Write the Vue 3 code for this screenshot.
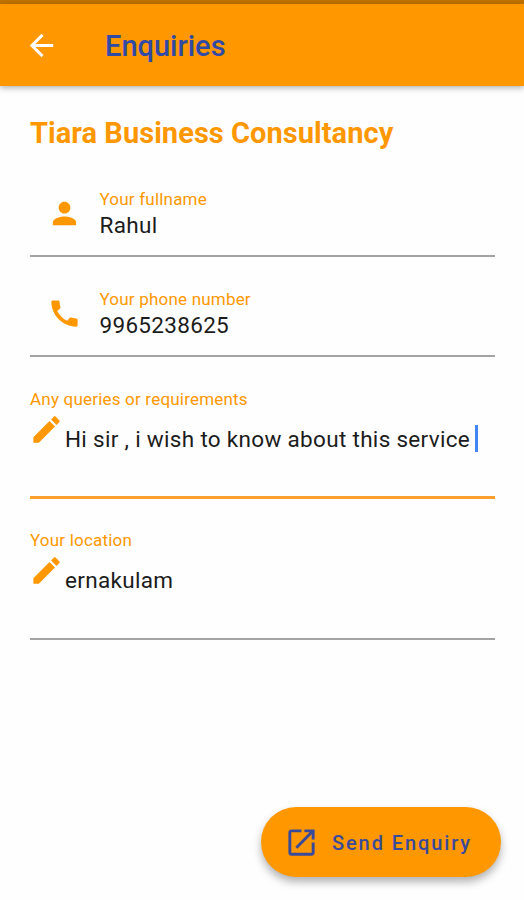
<template>
  <div class="screen">
    <div class="status-bar"></div>
    <header class="app-bar">
      <button class="back-btn" aria-label="Back">
        <svg class="icon" viewBox="0 0 24 24"><path :d="icons.back" /></svg>
      </button>
      <h1 class="app-title">Enquiries</h1>
    </header>

    <main class="content">
      <h2 class="company">Tiara Business Consultancy</h2>

      <div v-for="field in contactFields" :key="field.label" class="field">
        <svg class="icon" viewBox="0 0 24 24"><path :d="icons[field.icon]" /></svg>
        <div class="field-body">
          <span class="label">{{ field.label }}</span>
          <span class="value">{{ field.value }}</span>
        </div>
      </div>

      <div
          v-for="area in areas"
          :key="area.label"
          class="area"
          :class="{ focused: area.focused }"
      >
        <span class="label">{{ area.label }}</span>
        <div class="area-row">
          <svg class="icon" viewBox="0 0 24 24"><path :d="icons.edit" /></svg>
          <span class="value">{{ area.value }}</span>
          <span v-if="area.focused" class="caret"></span>
        </div>
      </div>
    </main>

    <footer class="actions">
      <button class="send-btn">
        <svg class="icon" viewBox="0 0 24 24"><path :d="icons.open" /></svg>
        <span class="send-text">Send Enquiry</span>
      </button>
    </footer>
  </div>
</template>

<script setup>
const icons = {
  back: 'M20 11H7.83l5.59-5.59L12 4l-8 8 8 8 1.41-1.41L7.83 13H20v-2z',
  person: 'M12 12c2.21 0 4-1.79 4-4s-1.79-4-4-4-4 1.79-4 4 1.79 4 4 4zm0 2c-2.67 0-8 1.34-8 4v2h16v-2c0-2.66-5.33-4-8-4z',
  phone: 'M20.01 15.38c-1.23 0-2.42-.2-3.53-.56-.35-.12-.74-.03-1.01.24l-1.57 1.97c-2.83-1.35-5.48-3.9-6.89-6.83l1.95-1.66c.27-.28.35-.67.24-1.02-.37-1.11-.56-2.3-.56-3.53 0-.54-.45-.99-.99-.99H4.19C3.65 3 3 3.24 3 3.99 3 13.28 10.73 21 20.01 21c.71 0 .99-.63.99-1.18v-3.45c0-.54-.45-.99-.99-.99z',
  edit: 'M3 17.25V21h3.75L17.81 9.94l-3.75-3.75L3 17.25zM20.71 7.04c.39-.39.39-1.02 0-1.41l-2.34-2.34c-.39-.39-1.02-.39-1.41 0l-1.83 1.83 3.75 3.75 1.83-1.83z',
  open: 'M19 19H5V5h7V3H5c-1.11 0-2 .9-2 2v14c0 1.1.89 2 2 2h14c1.1 0 2-.9 2-2v-7h-2v7zM14 3v2h3.59l-9.83 9.83 1.41 1.41L19 6.41V10h2V3h-7z',
};

const contactFields = [
  { icon: 'person', label: 'Your fullname', value: 'Rahul' },
  { icon: 'phone', label: 'Your phone number', value: '9965238625' },
];

const areas = [
  {
    label: 'Any queries or requirements',
    value: 'Hi sir , i wish to know about this service',
    focused: true,
  },
  { label: 'Your location', value: 'ernakulam', focused: false },
];
</script>

<style>
body {
  margin: 0;
  background: #fefefe;
}
</style>

<style scoped>
.screen {
  display: flex;
  flex-direction: column;
  height: 900px;
  overflow: hidden;
  background: #fefefe;
  font-family: Roboto, "Liberation Sans", sans-serif;
}

.icon {
  display: block;
  flex: none;
  width: 35px;
  height: 35px;
  fill: currentColor;
}

button {
  border: none;
  padding: 0;
  font-family: inherit;
  cursor: pointer;
}

.status-bar {
  flex: none;
  height: 4px;
  background: #bf7300;
}

.app-bar {
  display: flex;
  flex: none;
  align-items: center;
  box-sizing: border-box;
  height: 82px;
  padding: 1px 24px 0;
  background: #ff9800;
  box-shadow: 0 2px 6px rgba(0, 0, 0, 0.3);
}

.back-btn {
  background: none;
  color: #ffffff;
}

.app-title {
  margin: 0 0 0 46px;
  font-size: 29px;
  font-weight: 500;
  line-height: 34px;
  color: #304aa5;
}

.content {
  flex: 1;
  padding: 30px 29px 0 30px;
}

.company {
  margin: 0;
  font-size: 29px;
  font-weight: 700;
  line-height: 34px;
  letter-spacing: 0.05px;
  color: #ff9800;
}

.field {
  display: flex;
  box-sizing: border-box;
  height: 100px;
  padding: 39px 0 0 17px;
  border-bottom: 2px solid #a3a3a3;
  color: #ff9800;
}

.company + .field {
  height: 107px;
  padding-top: 46px;
}

.field-body {
  display: flex;
  flex-direction: column;
  margin: -8px 0 0 17.5px;
}

.label {
  display: block;
  font-size: 17px;
  line-height: 22px;
  letter-spacing: 0.2px;
  white-space: nowrap;
  color: #ff9800;
}

.value {
  font-size: 22.5px;
  line-height: 30px;
  letter-spacing: 0.31px;
  white-space: nowrap;
  color: #1c1c1c;
}

.area {
  box-sizing: border-box;
  height: 142px;
  padding-top: 31px;
  border-bottom: 2px solid #a3a3a3;
}

.area.focused {
  border-bottom: 3px solid #ff9f2e;
}

.area:not(.focused) {
  height: 141px;
  padding-top: 30px;
}

.area-row {
  display: flex;
  align-items: flex-start;
  margin-top: 2px;
  color: #ff9800;
}

.area-row .icon {
  margin-left: -1px;
}

.area-row .value {
  margin: 12px 0 0 1px;
}

.caret {
  width: 3px;
  height: 27px;
  margin: 13px 0 0 5px;
  background: #4285f4;
}

.actions {
  display: flex;
  flex: none;
  justify-content: flex-end;
  padding: 0 23px 23px;
}

.send-btn {
  display: flex;
  align-items: center;
  box-sizing: border-box;
  width: 240px;
  height: 70px;
  padding-left: 23px;
  border-radius: 35px;
  background: #ff9800;
  box-shadow: 0 5px 9px rgba(0, 0, 0, 0.3);
  color: #3a4a9a;
}

.send-text {
  margin: 1px 0 0 13px;
  font-size: 20px;
  font-weight: 500;
  letter-spacing: 1.9px;
  white-space: nowrap;
}
</style>
